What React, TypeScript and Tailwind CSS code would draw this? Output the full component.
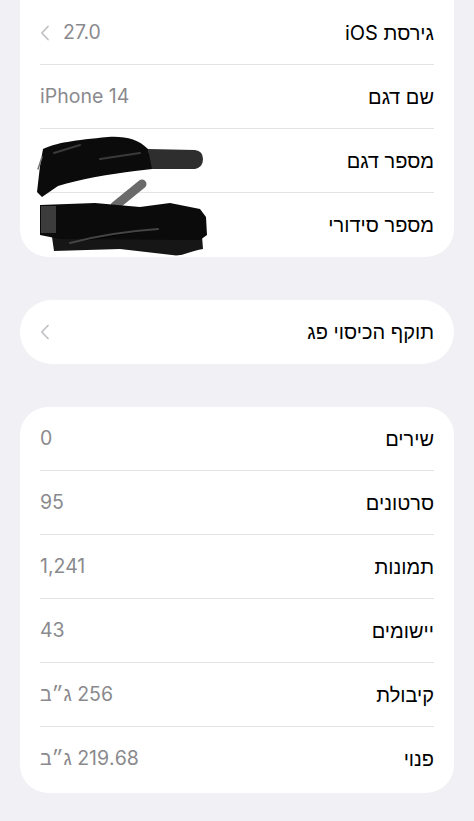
import React from 'react';

type Row = { label: string; value?: string; chevron?: boolean; redact?: 'model' | 'serial' };

const topRows: Row[] = [
  { label: 'גירסת iOS', value: '27.0', chevron: true },
  { label: 'שם דגם', value: 'iPhone 14' },
  { label: 'מספר דגם', redact: 'model' },
  { label: 'מספר סידורי', redact: 'serial' },
];

const countRows: Row[] = [
  { label: 'שירים', value: '0' },
  { label: 'סרטונים', value: '95' },
  { label: 'תמונות', value: '1,241' },
  { label: 'יישומים', value: '43' },
  { label: 'קיבולת', value: '256 ג״ב' },
  { label: 'פנוי', value: '219.68 ג״ב' },
];

const Chevron = () => (
  <svg width="10" height="16" viewBox="0 0 10 16" fill="none">
    <path d="M8 1.5 L1.8 8 L8 14.5" stroke="#c2c2c6" strokeWidth="1.8" strokeLinecap="round" strokeLinejoin="round" />
  </svg>
);

// hand scribbles that hide the model and serial numbers
const Scribble = ({ kind }: { kind: 'model' | 'serial' }) => {
  if (kind === 'model') {
    return (
      <svg width="170" height="64" viewBox="0 0 170 64" className="overflow-visible">
        <path d="M108 20 L155 21 Q163 22 163 30 Q163 38 155 40 L110 40 Z" fill="#2e2e2e" />
        <path d="M3 20 C15 14 35 11 68 8 C85 7 98 10 108 20 L112 40 L95 42 C70 45 40 50 18 57 L2 68 L-3 63 L0 37 Z" fill="#0b0b0b" />
        <path d="M14 24 L40 16 M60 30 L100 24" stroke="#3a3a3a" strokeWidth="2" strokeLinecap="round" />
        <path d="M-2 40 L2 28" stroke="#777" strokeWidth="1.5" strokeLinecap="round" />
      </svg>
    );
  }
  return (
    <svg width="170" height="64" viewBox="0 0 170 64" className="overflow-visible">
      <path d="M102 -9 L75 13" stroke="#6a6a6a" strokeWidth="9" strokeLinecap="round" />
      <path d="M12 44 L162 43 L163 56 C150 58 142 64 132 62 L80 56 L14 58 Z" fill="#161616" />
      <path d="M0 12 L55 10 L100 14 L130 10 L160 16 L166 24 L167 42 L160 47 L20 46 L0 42 Z" fill="#0b0b0b" />
      <path d="M1 13 L16 13 L16 40 L1 40 Z" fill="#3c3c3c" />
      <path d="M30 50 C60 42 90 38 118 36" stroke="#444" strokeWidth="2" strokeLinecap="round" />
    </svg>
  );
};

const SettingsRow = ({ row, last }: { row: Row; last: boolean }) => (
  <div className="px-5">
    <div className={`h-16 flex items-center justify-between ${last ? '' : 'border-b border-[#e3e3e6]'}`}>
      <span className="text-[20px] text-black">{row.label}</span>
      {row.redact ? (
        <Scribble kind={row.redact} />
      ) : (
        <span className="flex items-center gap-[13px] text-[19.5px] text-[#8a8a8e]">
          <span>{row.value}</span>
          {row.chevron && <Chevron />}
        </span>
      )}
    </div>
  </div>
);

export default function App() {
  return (
    <div
      dir="rtl"
      className="min-h-[821px] w-full bg-[#f0f0f5] pb-8"
      style={{ fontFamily: 'Inter, "Liberation Sans", sans-serif' }}
    >
      <div className="mx-5 pt-px bg-white rounded-b-[28px] overflow-hidden">
        {topRows.map((r, i) => (
          <SettingsRow key={r.label} row={r} last={i === topRows.length - 1} />
        ))}
      </div>

      <div className="mx-5 mt-[43px] bg-white rounded-full h-16 px-5 flex items-center justify-between">
        <span className="text-[20px] text-black">תוקף הכיסוי פג</span>
        <Chevron />
      </div>

      <div className="mx-5 mt-[43px] bg-white rounded-[28px] pb-[2px]">
        {countRows.map((r, i) => (
          <SettingsRow key={r.label} row={r} last={i === countRows.length - 1} />
        ))}
      </div>
    </div>
  );
}
